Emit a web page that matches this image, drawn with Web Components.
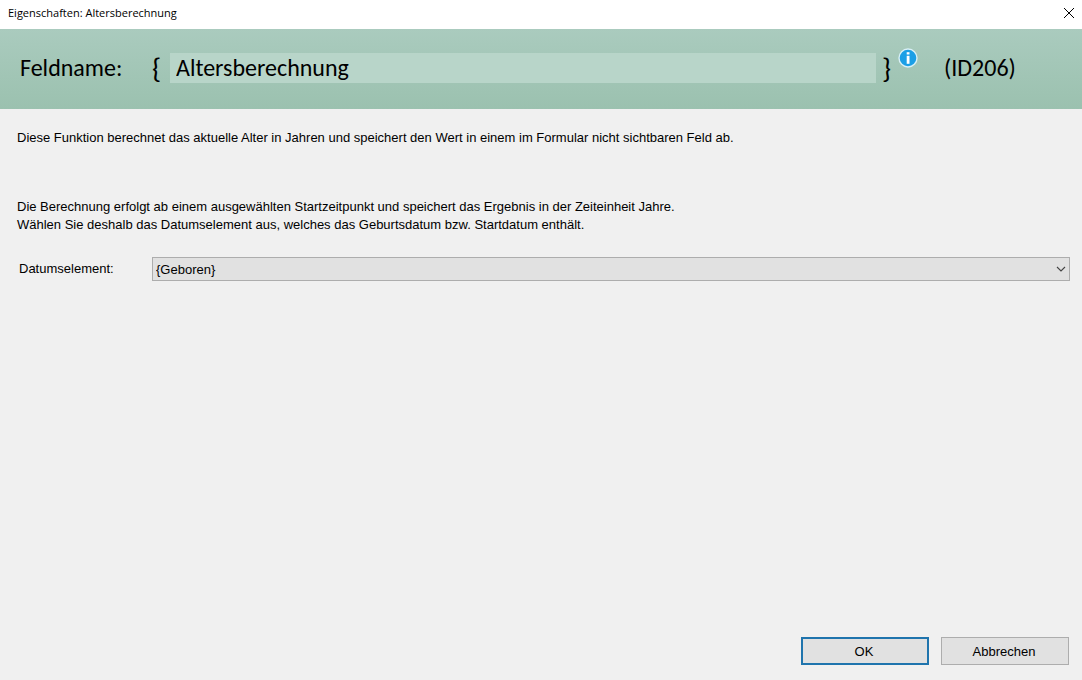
<!DOCTYPE html>
<html lang="de">
<head>
<meta charset="utf-8">
<meta name="viewport" content="width=device-width, initial-scale=1">
<title>Eigenschaften: Altersberechnung</title>
<style>
body {
    margin: 0;
    background: #f0f0f0;
    color: #000;
    font: 13px/18px "Liberation Sans", Arial, sans-serif;
}
</style>
</head>
<body>
<properties-dialog>
    <title-bar slot="title">Eigenschaften: Altersberechnung</title-bar>
    <field-header slot="header" label="Feldname:" value="Altersberechnung">(ID206)</field-header>
    <help-text>Diese Funktion berechnet das aktuelle Alter in Jahren und speichert den Wert in einem im Formular nicht sichtbaren Feld ab.</help-text>
    <help-text>Die Berechnung erfolgt ab einem ausgewählten Startzeitpunkt und speichert das Ergebnis in der Zeiteinheit Jahre.<br>Wählen Sie deshalb das Datumselement aus, welches das Geburtsdatum bzw. Startdatum enthält.</help-text>
    <select-row label="Datumselement:" value="{Geboren}"></select-row>
    <dialog-button slot="buttons" primary>OK</dialog-button>
    <dialog-button slot="buttons">Abbrechen</dialog-button>
</properties-dialog>

<script>
class PropertiesDialog extends HTMLElement {
    constructor() {
        super();
        this.attachShadow({mode: "open"}).innerHTML = `
        <style>
        :host {
            display: flex;
            flex-direction: column;
            min-height: 100vh;
        }

        main {
            flex: 1;
            display: flex;
            flex-direction: column;
            padding: 20px 12px 20px 17px;
        }

        footer {
            display: flex;
            justify-content: flex-end;
            gap: 12px;
            padding: 0 13px 15px;
        }
        </style>
        <slot name="title"></slot>
        <slot name="header"></slot>
        <main><slot></slot></main>
        <footer><slot name="buttons"></slot></footer>
        `;
    }
}

class TitleBar extends HTMLElement {
    constructor() {
        super();
        this.attachShadow({mode: "open"}).innerHTML = `
        <style>
        :host {
            display: flex;
            align-items: center;
            justify-content: space-between;
            height: 29px;
            padding: 0 8px 3px;
            box-sizing: border-box;
            background: #fff;
            font: 11px/16px "Open Sans", "Segoe UI", sans-serif;
        }

        button {
            display: flex;
            padding: 0;
            border: 0;
            background: none;
        }
        </style>
        <span><slot></slot></span>
        <button type="button" aria-label="Schließen">
            <svg width="10" height="26" viewBox="0 0 10 26">
                <path d="M0 8l10 10M10 8L0 18" stroke="#000" fill="none"/>
            </svg>
        </button>
        `;
    }
}

class FieldHeader extends HTMLElement {
    constructor() {
        super();
        this.attachShadow({mode: "open"}).innerHTML = `
        <style>
        :host {
            display: flex;
            align-items: center;
            height: 80px;
            padding: 0 20px 2px;
            box-sizing: border-box;
            background: linear-gradient(#aacbbe, #9bc1af);
            font: 24px/30px Carlito, Calibri, Lato, sans-serif;
        }

        label {
            width: 132px;
        }

        .brace {
            width: 18px;
            font-size: 29px;
        }

        .close {
            box-sizing: border-box;
            padding-right: 3px;
            text-align: right;
        }

        input {
            flex: 1;
            min-width: 0;
            height: 30px;
            padding: 0 6px;
            border: 0;
            box-sizing: border-box;
            background: #b8d5c9;
            color: inherit;
            font: inherit;
        }

        .info {
            align-self: flex-start;
            display: flex;
            margin: 19px 0 0 4px;
            padding: 0;
            border: 0;
            background: none;
        }

        .id {
            width: 144px;
            box-sizing: border-box;
            padding-left: 26px;
        }
        </style>
        <label for="name"></label>
        <span class="brace">{</span>
        <input id="name" type="text">
        <span class="brace close">}</span>
        <button class="info" type="button" aria-label="Info">
            <svg width="20" height="20" viewBox="0 0 20 20">
                <circle cx="10" cy="10" r="9" fill="#1b9fe6" stroke="#d9f0f7" stroke-width="1.4"/>
                <rect x="8.7" y="4.2" width="2.8" height="2.3" fill="#fff"/>
                <rect x="8.7" y="7.8" width="2.8" height="8" fill="#fff"/>
            </svg>
        </button>
        <span class="id"><slot></slot></span>
        `;
    }

    connectedCallback() {
        this.shadowRoot.querySelector("label").textContent = this.getAttribute("label");
        this.shadowRoot.querySelector("input").value = this.getAttribute("value");
    }
}

class HelpText extends HTMLElement {
    constructor() {
        super();
        this.attachShadow({mode: "open"}).innerHTML = `
        <style>
        :host {
            display: block;
            min-height: 36px;
            margin-bottom: 33px;
        }

        :host(:nth-of-type(2)) {
            margin-bottom: 23px;
        }

        p {
            margin: 0;
        }
        </style>
        <p><slot></slot></p>
        `;
    }
}

class SelectRow extends HTMLElement {
    constructor() {
        super();
        this.attachShadow({mode: "open"}).innerHTML = `
        <style>
        :host {
            display: flex;
            align-items: center;
            padding-left: 2px;
        }

        label {
            width: 133px;
        }

        .box {
            flex: 1;
            display: grid;
            align-items: center;
        }

        select, svg {
            grid-area: 1 / 1;
        }

        select {
            appearance: none;
            width: 100%;
            height: 24px;
            padding: 2px 20px 0 3px;
            border: 1px solid #adadad;
            border-radius: 0;
            background: #e1e1e1;
            color: inherit;
            font: inherit;
        }

        svg {
            justify-self: end;
            margin-right: 4px;
            pointer-events: none;
        }
        </style>
        <label for="choice"></label>
        <div class="box">
            <select id="choice"><option></option></select>
            <svg width="10" height="6" viewBox="0 0 10 6">
                <path d="M1 1l4 4 4-4" stroke="#444" stroke-width="1.1" fill="none"/>
            </svg>
        </div>
        `;
    }

    connectedCallback() {
        this.shadowRoot.querySelector("label").textContent = this.getAttribute("label");
        this.shadowRoot.querySelector("option").textContent = this.getAttribute("value");
    }
}

class DialogButton extends HTMLElement {
    constructor() {
        super();
        this.attachShadow({mode: "open"}).innerHTML = `
        <style>
        :host {
            display: block;
        }

        button {
            width: 128px;
            height: 28px;
            padding: 2px 2px 0 0;
            border: 1px solid #adadad;
            background: #e1e1e1;
            color: inherit;
            font: inherit;
        }

        :host([primary]) button {
            border: 2px solid #1f74ad;
        }
        </style>
        <button type="button"><slot></slot></button>
        `;
    }
}

customElements.define("properties-dialog", PropertiesDialog);
customElements.define("title-bar", TitleBar);
customElements.define("field-header", FieldHeader);
customElements.define("help-text", HelpText);
customElements.define("select-row", SelectRow);
customElements.define("dialog-button", DialogButton);
</script>
</body>
</html>
